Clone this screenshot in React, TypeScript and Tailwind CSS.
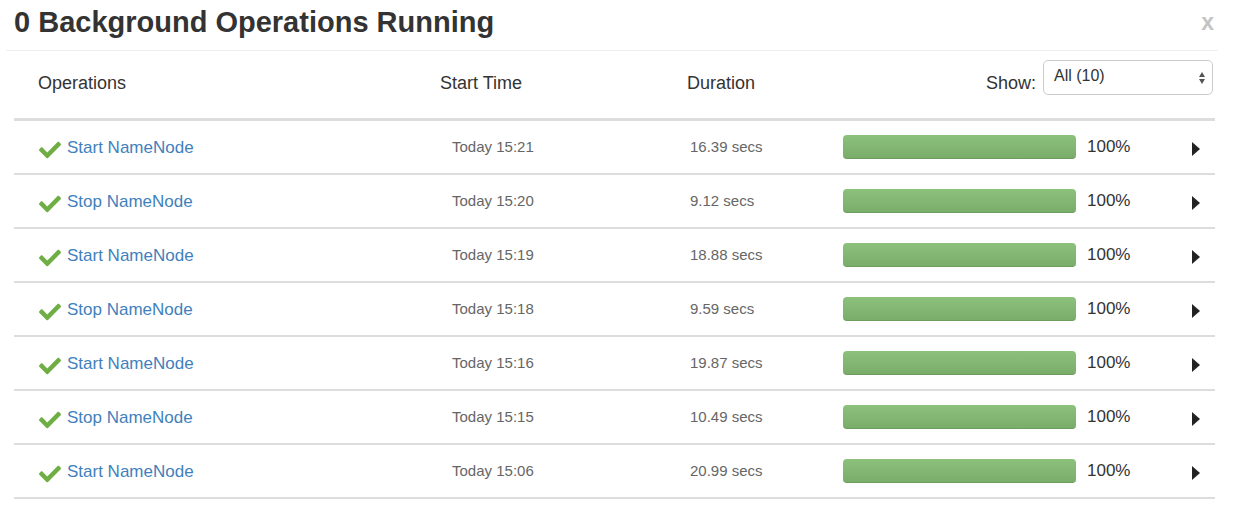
import { FaCheck } from 'react-icons/fa';

const ops = [
  { name: 'Start NameNode', time: 'Today 15:21', dur: '16.39 secs' },
  { name: 'Stop NameNode', time: 'Today 15:20', dur: '9.12 secs' },
  { name: 'Start NameNode', time: 'Today 15:19', dur: '18.88 secs' },
  { name: 'Stop NameNode', time: 'Today 15:18', dur: '9.59 secs' },
  { name: 'Start NameNode', time: 'Today 15:16', dur: '19.87 secs' },
  { name: 'Stop NameNode', time: 'Today 15:15', dur: '10.49 secs' },
  { name: 'Start NameNode', time: 'Today 15:06', dur: '20.99 secs' },
];

export default function App() {
  return (
    <div className="w-[1236px] h-[506px] bg-white font-['Liberation_Sans',Arial,sans-serif] text-[#333] overflow-hidden">
      {/* Title */}
      <div className="flex items-center justify-between h-[50px] pl-[14px] pr-[22px] pb-[6px]">
        <h1 className="text-[29px] font-bold text-[#333] leading-none">0 Background Operations Running</h1>
        <span className="text-[23px] font-bold text-[#c4c4c4] leading-none">x</span>
      </div>
      <div className="mx-[6px] w-[1212px] border-t border-[#eee]" />

      <div className="ml-[14px] w-[1201px]">
        {/* Header */}
        <div className="flex items-center h-[70px] pb-[2px] border-b-[3px] border-[#ddd] text-[18px]">
          <div className="w-[412px] pl-[24px]">Operations</div>
          <div className="w-[247px] pl-[14px]">Start Time</div>
          <div className="w-[156px] pl-[14px]">Duration</div>
          <div className="flex-1 flex items-center justify-end pr-[2px]">
            <span className="mr-[7px]">Show:</span>
            <div className="relative flex items-center w-[170px] h-[35px] mb-[13px] border border-[#ccc] rounded-[5px] pl-[10px] pb-[2px] text-[16px]">
              All (10)
              <div className="absolute right-[7px] top-[11px] flex flex-col gap-[2px]">
                <span className="w-0 h-0 border-x-[3.5px] border-x-transparent border-b-[5px] border-b-[#555]" />
                <span className="w-0 h-0 border-x-[3.5px] border-x-transparent border-t-[5px] border-t-[#555]" />
              </div>
            </div>
          </div>
        </div>

        {/* Rows */}
        {ops.map((op, i) => (
          <div key={i} className="flex items-center h-[54px] border-b-[2px] border-[#ddd]">
            <div className="w-[412px] pl-[25px] flex items-center pt-[2px]">
              <FaCheck className="w-[22px] h-[22px] text-[#6fae44] mr-[6px] mt-[3px]" />
              <span className="text-[17px] text-[#3f81bd]">{op.name}</span>
            </div>
            <div className="w-[247px] pl-[26px] text-[15px] text-[#666]">{op.time}</div>
            <div className="w-[156px] pl-[17px] text-[15px] text-[#666]">{op.dur}</div>
            <div className="w-[14px]" />
            <div className="w-[233px] h-[24px] rounded-[4px] bg-gradient-to-b from-[#8cc17c] to-[#7aad6a] border-b border-[#6c9c5e]" />
            <span className="ml-[11px] text-[17px] text-[#333]">100%</span>
            <div className="flex-1 flex justify-end pr-[15px] pt-[3px]">
              <span className="w-0 h-0 border-y-[7px] border-y-transparent border-l-[8px] border-l-[#222]" />
            </div>
          </div>
        ))}
      </div>
    </div>
  );
}
